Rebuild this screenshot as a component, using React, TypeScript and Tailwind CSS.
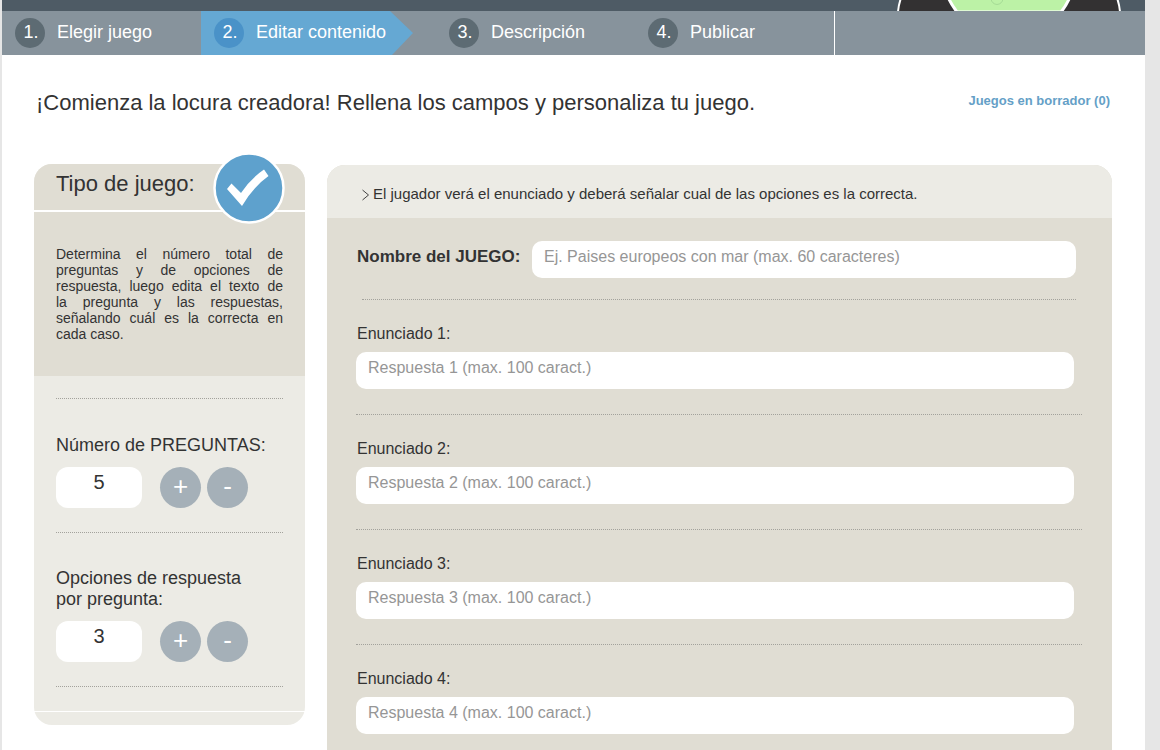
import { useState } from "react";

const steps = ["Elegir juego", "Editar contenido", "Descripción", "Publicar"];
const questions = [1, 2, 3, 4];

function Divider({ className = "" }: { className?: string }) {
  return <hr className={`border-0 border-t border-dotted border-[#a3a29c] ${className}`} />;
}

function Mascot() {
  return (
    <svg width="224" height="11" viewBox="0 0 224 11" aria-hidden="true">
      <path d="M1 12 Q1.500 5 4 -2 H220 Q222.500 5 223 12 Z" fill="#333132" stroke="#fff" strokeWidth="2" />
      <path d="M51 -3 Q54 4 60 12 H164 Q169 6 173 -3 Z" fill="#bcf2a6" stroke="#fff" strokeWidth="3" />
      <path d="M94 -1 Q95 4 100 4.500 Q105 4 106 -1" fill="none" stroke="#a6dc96" strokeWidth="1" />
    </svg>
  );
}

function Steps() {
  return (
    <nav className="bg-[#87939c] text-lg text-white">
      <ol className="flex h-11">
        {steps.map((step, i) => {
          const active = i === 1;
          return (
            <li
              key={step}
              className={`relative ${active ? "w-[235px]" : "w-[199px]"} ${i === 3 ? "box-content border-r border-white" : ""}`}
            >
              {active && (
                <svg className="absolute top-0 left-0" width="212" height="44" viewBox="0 0 212 44" aria-hidden="true">
                  <path d="M0 0H189L212 22L191 44H0Z" fill="#65a8d3" />
                </svg>
              )}
              <a href="#" className="relative flex h-full items-center pl-[13px]">
                <span
                  className={`flex size-[30px] justify-center rounded-full pl-0.5 leading-7 ${active ? "bg-[#4a92c8]" : "bg-[#5d6b73]"}`}
                >
                  {i + 1}.
                </span>
                <span className="pb-0.5 pl-3">{step}</span>
              </a>
            </li>
          );
        })}
      </ol>
    </nav>
  );
}

type StepperProps = {
  id: string;
  label: string;
  value: number;
  onChange: (value: number) => void;
};

function Stepper({ id, label, value, onChange }: StepperProps) {
  const button = "flex size-[41px] items-center justify-center rounded-full bg-[#a5b0b8] pb-0.5 text-[26px] text-white";

  return (
    <div>
      <label htmlFor={id} className="block w-[215px] text-lg leading-[21px]">
        {label}
      </label>
      <div className="mt-[11px] flex items-center">
        <input
          id={id}
          value={value}
          readOnly
          className="h-[41px] w-[86px] rounded-xl bg-white pb-2.5 text-center text-xl outline-none"
        />
        <button type="button" aria-label="Más" className={`ml-[18px] ${button}`} onClick={() => onChange(value + 1)}>
          +
        </button>
        <button
          type="button"
          aria-label="Menos"
          className={`ml-1.5 ${button}`}
          onClick={() => onChange(Math.max(1, value - 1))}
        >
          -
        </button>
      </div>
    </div>
  );
}

function GameType() {
  const [total, setTotal] = useState(5);
  const [options, setOptions] = useState(3);

  return (
    <aside className="relative w-[271px] shrink-0 self-start rounded-[18px] bg-[#ecebe5]">
      <h2 className="h-12 rounded-t-[18px] border-b-2 border-white bg-[#e0ddd3] pl-[22px] text-[22px] leading-10">
        Tipo de juego:
      </h2>
      <svg className="absolute -top-3 right-5" width="72" height="72" viewBox="0 0 72 72" aria-hidden="true">
        <circle cx="36" cy="36" r="34.500" fill="#5ea1cd" stroke="#fff" strokeWidth="2.500" />
        <path d="M14 37L18.500 31.500L28 41Q37 27 51 17.500L55.500 24Q40 35 29 54Z" fill="#fff" />
      </svg>
      <p className="h-[164px] bg-[#e0ddd3] px-[22px] pt-[34px] text-justify text-sm leading-4">
        Determina el número total de preguntas y de opciones de respuesta, luego edita el texto de la&nbsp;pregunta y
        las respuestas, señalando cuál es la correcta en cada caso.
      </p>
      <div className="px-[22px] pt-[22px] pb-6">
        <Divider className="mb-9" />
        <Stepper id="preguntas" label="Número de PREGUNTAS:" value={total} onChange={setTotal} />
        <Divider className="mt-6 mb-[35px]" />
        <Stepper id="opciones" label="Opciones de respuesta por pregunta:" value={options} onChange={setOptions} />
        <Divider className="mt-6" />
      </div>
      <div className="h-3.5 border-t border-white" />
    </aside>
  );
}

function Editor() {
  const field =
    "h-[37px] rounded-[10px] bg-white px-3 pb-1.5 text-base text-[#333] outline-none placeholder:text-[#969696]";

  return (
    <section className="mt-px flex flex-1 flex-col rounded-t-[18px] bg-[#e0ddd3]">
      <p className="flex h-[53px] items-center rounded-t-[18px] bg-[#ecebe5] pt-1.5 pl-[35px] text-[15px]">
        <svg className="mr-[3px]" width="8" height="12" viewBox="0 0 8 12" fill="none" stroke="#444" aria-hidden="true">
          <path d="M0.500 1L6.500 6L0.500 11" />
        </svg>
        El jugador verá el enunciado y deberá señalar cual de las opciones es la correcta.
      </p>
      <form className="pt-[23px] pr-[30px] pl-[29px]">
        <div className="flex pr-1.5">
          <label htmlFor="nombre" className="w-44 shrink-0 pl-px text-[17px] leading-8 font-bold">
            Nombre del JUEGO:
          </label>
          <input
            id="nombre"
            maxLength={60}
            placeholder="Ej. Paises europeos con mar (max. 60 caracteres)"
            className={`min-w-0 flex-1 ${field}`}
          />
        </div>
        <Divider className="mt-[21px] mr-1.5 ml-1.5" />
        {questions.map((n) => (
          <div key={n}>
            {n > 1 && <Divider className="mt-[25px]" />}
            <label htmlFor={`enunciado-${n}`} className="mt-[21px] block pl-px leading-[26px]">
              Enunciado {n}:
            </label>
            <div className="mt-[5px] flex pr-2">
              <input
                id={`enunciado-${n}`}
                maxLength={100}
                placeholder={`Respuesta ${n} (max. 100 caract.)`}
                className={`min-w-0 flex-1 ${field}`}
              />
            </div>
          </div>
        ))}
      </form>
    </section>
  );
}

export default function App() {
  return (
    <div className="flex min-h-screen bg-[#e6e6e6] pr-[15px] pl-0.5 font-['Liberation_Sans',Arial,sans-serif] text-[#333]">
      <div className="flex flex-1 flex-col bg-white">
        <header className="flex justify-end bg-[#4e5b65] pr-6">
          <Mascot />
        </header>
        <Steps />
        <main className="flex flex-1 flex-col pr-[33px] pl-8">
          <div className="flex justify-between pt-8 pr-0.5 pl-0.5">
            <h1 className="text-[22px] leading-8">
              ¡Comienza la locura creadora! Rellena los campos y personaliza tu juego.
            </h1>
            <a href="#" className="pt-1 text-[13px] font-bold text-[#659fc7]">
              Juegos en borrador (0)
            </a>
          </div>
          <div className="mt-[45px] flex flex-1 gap-[22px]">
            <GameType />
            <Editor />
          </div>
        </main>
      </div>
    </div>
  );
}
